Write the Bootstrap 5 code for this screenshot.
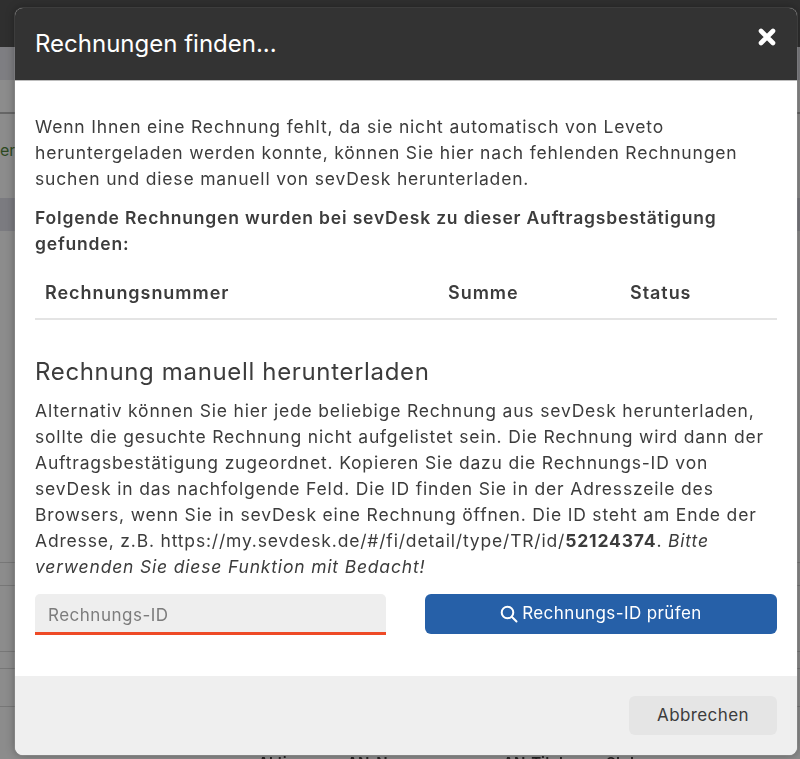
<!DOCTYPE html>
<html lang="de">
<head>
    <meta charset="UTF-8">
    <meta name="viewport" content="width=device-width, initial-scale=1.0">
    <title>Rechnungen finden</title>
    <link href="https://cdn.jsdelivr.net/npm/bootstrap@5.3.0/dist/css/bootstrap.min.css" rel="stylesheet">
    <style>
        html, body {
            height: 100%;
            overflow: hidden;
        }
        body {
            font-family: Inter, "Open Sans", "Liberation Sans", sans-serif;
            background-color: #8c8c8c;
            color: #3c3c3c;
        }
        .page-top {
            height: 47px;
            background-color: #2f2f2f;
        }
        .page-band {
            height: 33px;
            background-color: #7e7e82;
        }
        .page-gap {
            height: 34px;
            border-bottom: 2px solid #666;
        }
        .page-word {
            height: 84px;
            padding-top: 24px;
            width: 15px;
            white-space: nowrap;
            color: #2d4a22;
            font-size: 16px;
            line-height: 24px;
        }
        .page-strip {
            height: 33px;
            background-color: #7b7b80;
        }
        .page-line {
            border-bottom: 1px solid #777;
        }
        .page-foot {
            position: fixed;
            left: 258px;
            top: 752px;
            font-size: 15px;
            font-weight: 600;
            color: #222;
        }
        .page-foot span {
            display: inline-block;
        }
        .find-dialog {
            position: fixed;
            left: 15px;
            top: 8px;
            width: 782px;
            height: 747px;
            background-color: #fff;
            border-radius: 8px;
            overflow: hidden;
            border: 0;
            box-shadow: 0 0 0 1px rgba(255, 255, 255, .1), 0 0 10px rgba(0, 0, 0, .35);
        }
        .find-head {
            height: 73px;
            padding: 0 20px;
            background-color: #333;
            border-bottom: 1px solid #bdbdbd;
            border-radius: 0;
            align-items: center;
        }
        .find-head h5 {
            font-size: 24px;
            font-weight: 400;
            color: #fff;
            margin: 0;
        }
        .find-close {
            background: none;
            border: 0;
            padding: 0;
            line-height: 0;
            margin: -14px 1px 0 0;
        }
        .find-body {
            padding: 33px 20px 0;
            font-size: 17.5px;
            line-height: 26px;
            letter-spacing: .82px;
            color: #3c3c3c;
        }
        .find-body p {
            margin-bottom: 13px;
        }
        .find-body .strong-line {
            font-weight: 600;
            margin-bottom: 0;
        }
        .find-table {
            margin: 0;
            --bs-table-bg: transparent;
            --bs-table-color: #3c3c3c;
            color: #3c3c3c;
        }
        .find-table th {
            padding: 23px 10px 12px;
            font-size: 18px;
            font-weight: 600;
            letter-spacing: .95px;
            border-bottom: 2px solid #e4e4e4;
        }
        .manual-title {
            font-size: 24px;
            font-weight: 400;
            line-height: 30px;
            letter-spacing: .65px;
            margin: 37px 0 11px;
            color: #3c3c3c;
        }
        .find-input {
            width: 351px;
            height: 41px;
            background-color: #eee;
            border: 0;
            border-bottom: 3px solid #ee4a26;
            border-radius: 5px 5px 0 0;
            padding: 3px 13px 0;
            font-size: 17px;
            letter-spacing: .5px;
        }
        .find-input::placeholder {
            color: #7c7c7c;
        }
        .find-check {
            width: 352px;
            height: 40px;
            background-color: #2660a8;
            border: 0;
            border-radius: 6px;
            color: #fff;
            font-size: 17px;
            letter-spacing: .4px;
        }
        .find-foot {
            height: 79px;
            padding: 0 20px 0 0;
            background-color: #efefef;
            border: 0;
            border-radius: 0;
        }
        .find-cancel {
            width: 148px;
            height: 39px;
            background-color: #e5e5e5;
            border: 0;
            border-radius: 6px;
            color: #3c3c3c;
            font-size: 17px;
            letter-spacing: .4px;
            margin: 0;
        }
        .find-row {
            margin-top: 14px;
        }
    </style>
</head>
<body>
    <div class="page-top"></div>
    <div class="page-band"></div>
    <div class="page-gap"></div>
    <div class="page-word">er</div>
    <div class="page-strip"></div>
    <div class="page-line" style="height: 332px"></div>
    <div class="page-line" style="height: 23px"></div>
    <div class="page-line" style="height: 66px"></div>
    <div class="page-line" style="height: 17px"></div>
    <div class="page-line" style="height: 38px"></div>
    <div class="page-foot"><span style="width: 89px">Aktion</span><span style="width: 156px">AN-Nr.</span><span style="width: 103px">AN-Titel</span><span>Status</span></div>

    <div class="modal-content find-dialog">
        <div class="modal-header find-head justify-content-between">
            <h5 class="modal-title">Rechnungen finden...</h5>
            <button class="find-close" type="button" aria-label="Schließen">
                <svg width="18" height="18" viewBox="0 0 18 18"><path d="M3 3 15 15M15 3 3 15" stroke="#fff" stroke-width="4.6" stroke-linecap="round"/></svg>
            </button>
        </div>
        <div class="modal-body find-body">
            <p>Wenn Ihnen eine Rechnung fehlt, da sie nicht automatisch von Leveto<br>heruntergeladen werden konnte, können Sie hier nach fehlenden Rechnungen<br>suchen und diese manuell von sevDesk herunterladen.</p>
            <p class="strong-line">Folgende Rechnungen wurden bei sevDesk zu dieser Auftragsbestätigung<br>gefunden:</p>
            <table class="table find-table">
                <thead>
                    <tr>
                        <th style="width: 403px">Rechnungsnummer</th>
                        <th style="width: 182px">Summe</th>
                        <th>Status</th>
                    </tr>
                </thead>
            </table>
            <h4 class="manual-title">Rechnung manuell herunterladen</h4>
            <p class="mb-0">Alternativ können Sie hier jede beliebige Rechnung aus sevDesk herunterladen,<br>sollte die gesuchte Rechnung nicht aufgelistet sein. Die Rechnung wird dann der<br>Auftragsbestätigung zugeordnet. Kopieren Sie dazu die Rechnungs-ID von<br>sevDesk in das nachfolgende Feld. Die ID finden Sie in der Adresszeile des<br>Browsers, wenn Sie in sevDesk eine Rechnung öffnen. Die ID steht am Ende der<br>Adresse, z.B. https://my.sevdesk.de/#/fi/detail/type/TR/id/<b>52124374</b>. <i>Bitte<br>verwenden Sie diese Funktion mit Bedacht!</i></p>
            <div class="d-flex justify-content-between find-row">
                <input class="form-control find-input flex-grow-0" type="text" placeholder="Rechnungs-ID">
                <button class="btn find-check d-flex align-items-center justify-content-center gap-1" type="button">
                    <svg width="18" height="18" viewBox="0 0 18 18" fill="none" stroke="#fff" stroke-width="2"><circle cx="7.5" cy="7.5" r="5.8"/><path d="M12 12 16.5 16.5" stroke-linecap="round"/></svg>
                    Rechnungs-ID prüfen
                </button>
            </div>
        </div>
        <div class="modal-footer find-foot">
            <button class="btn find-cancel" type="button">Abbrechen</button>
        </div>
    </div>

    <script src="https://cdn.jsdelivr.net/npm/bootstrap@5.3.0/dist/js/bootstrap.bundle.min.js"></script>
</body>
</html>
